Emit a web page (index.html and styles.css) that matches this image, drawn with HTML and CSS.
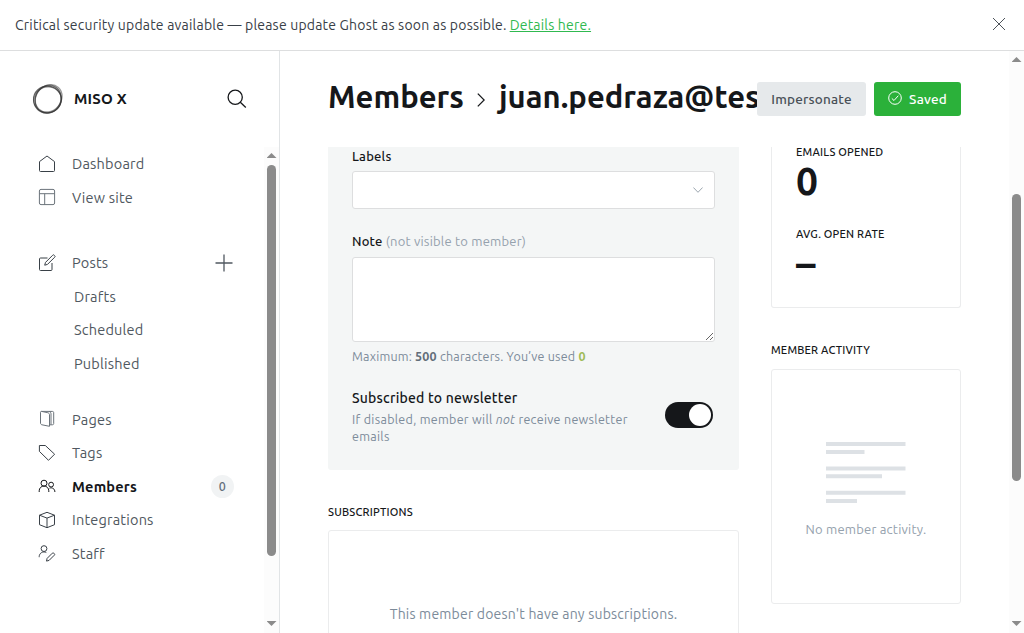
FILE: index.html
```html
<!DOCTYPE html>
<html lang="en">
<head>
<meta charset="utf-8">
<title>Members</title>
<link rel="stylesheet" href="styles.css">
</head>
<body>
<div class="app">
  <div class="banner">
    <p class="banner-text"><span>Critical security update available — please update Ghost as soon as possible.</span><a class="banner-link" href="#">Details here.</a></p>
    <svg class="close" viewBox="0 0 14 14"><path d="M1 1l12 12M13 1L1 13"/></svg>
  </div>
  <div class="body">
    <aside class="sidebar">
      <div class="brand">
        <svg class="logo" viewBox="0 0 32 32">
          <ellipse cx="15.4" cy="16.4" rx="13.9" ry="13.3" class="l1"/>
          <ellipse cx="16.7" cy="15.3" rx="14.5" ry="12.4" transform="rotate(-48 16.7 15.3)" class="l2"/>
          <ellipse cx="16.3" cy="16.2" rx="12.7" ry="14.2" transform="rotate(32 16 16)" class="l3"/>
          <ellipse cx="15.2" cy="16.8" rx="13.9" ry="13" transform="rotate(-20 16 16)" class="l4"/>
          <ellipse cx="16" cy="16" rx="14.2" ry="12.6" transform="rotate(-62 16 16)" class="l4"/>
        </svg>
        <span class="brand-name">MISO X</span>
        <svg class="search" viewBox="0 0 20 20"><circle cx="8.2" cy="8.2" r="7.1"/><path d="M13.3 13.3l5.5 5.2"/></svg>
      </div>
      <div class="nav-wrap">
        <nav class="nav">
          <div class="group">
            <a class="item"><svg class="icon" viewBox="0 0 18 18"><path d="M1.5 6.6L9 1l7.5 5.6v8.900a1 1 0 0 1-1 1h-13a1 1 0 0 1-1-1z"/></svg><span>Dashboard</span></a>
            <a class="item"><svg class="icon soft" viewBox="0 0 18 18"><rect x="1.400" y="1.400" width="15.200" height="15.200" rx="1.600"/><path d="M1.500 5.700h15M6.700 5.700v11"/></svg><span>View site</span></a>
          </div>
          <div class="group posts">
            <a class="item"><svg class="icon" viewBox="0 0 18 18"><path d="M9.500 4H2.500a1 1 0 0 0-1 1v10.500a1 1 0 0 0 1 1H13a1 1 0 0 0 1-1V9"/><path d="M6.700 11.200l.8-2.800L14.600 1.300a1.100 1.100 0 0 1 1.700 0l.3.3a1.100 1.100 0 0 1 0 1.700L9.500 10.400z"/></svg><span>Posts</span><svg class="plus" viewBox="0 0 18 18"><path d="M9 .5v17M.5 9h17"/></svg></a>
            <a class="item sub"><span>Drafts</span></a>
            <a class="item sub"><span>Scheduled</span></a>
            <a class="item sub"><span>Published</span></a>
          </div>
          <div class="group">
            <a class="item"><svg class="icon soft" viewBox="0 0 18 18"><path d="M2.500 2.300c0-.6.4-1 1-.9l6.300 1.300c1 .3 1.700 1 1.700 2v11.600L4 14.800c-.9-.2-1.500-.9-1.500-1.800zM3.400 1.400h11c.8 0 1.300.5 1.300 1.200v11c0 .7-.5 1.200-1.300 1.200h-2.900M11 1.400c1.300.5 2 1.200 2 2.400v10.800"/></svg><span>Pages</span></a>
            <a class="item"><svg class="icon" viewBox="0 0 18 18"><path d="M1.400 1.500h5.900l9.300 8.700-6.100 6.100L1.400 7.400z"/></svg><span>Tags</span></a>
            <a class="item active"><svg class="icon" viewBox="0 0 18 18"><circle cx="6" cy="6.200" r="3"/><path d="M1.200 15v-1.200a4.800 4.800 0 0 1 9.600 0V15"/><circle cx="13.100" cy="7.600" r="2.400"/><path d="M11.500 11.100c2.900-.9 5.400.8 5.400 3.900"/></svg><span>Members</span><span class="count">0</span></a>
            <a class="item"><svg class="icon" viewBox="0 0 18 18"><path d="M9 1.300l7.500 2.900v9.500L9 16.700l-7.500-3V4.200zM1.500 4.200L9 7.100l7.500-2.900M9 7.100v9.600"/></svg><span>Integrations</span></a>
            <a class="item"><svg class="icon" viewBox="0 0 18 18"><circle cx="6" cy="4.600" r="2.900"/><path d="M1.200 13.200v-.6a4.800 4.800 0 0 1 7.100-4.100"/><path d="M8.500 17.100l.6-2.700 5.200-5.200a1 1 0 0 1 1.500 0l.5.500a1 1 0 0 1 0 1.500L11.100 16.400z"/></svg><span>Staff</span></a>
          </div>
        </nav>
        <div class="scrollbar"><i class="arrow up"></i><i class="thumb"></i><i class="arrow down"></i></div>
      </div>
    </aside>
    <main class="main">
      <header class="header">
        <h1 class="title"><span class="crumb">Members</span><svg class="chev" viewBox="0 0 8 14"><path d="M.8.6L7.200 7 .8 13.400"/></svg><span>juan.pedraza@tes</span></h1>
        <div class="actions">
          <button class="btn grey"><span>Impersonate</span></button>
          <button class="btn green"><svg class="check" viewBox="0 0 14 14"><circle cx="7" cy="7" r="6.300"/><path d="M3.800 7.400l2.200 2.100 4.300-4.800"/></svg><span>Saved</span></button>
        </div>
      </header>
      <div class="content">
        <section class="left">
          <div class="panel">
            <label class="label">Labels</label>
            <div class="select"><svg class="down-chev" viewBox="0 0 10 6"><path d="M.4.5L5 5.300 9.600.5"/></svg></div>
            <label class="label note">Note <span class="hint">(not visible to member)</span></label>
            <textarea class="textarea"></textarea>
            <p class="help counter">Maximum: <b>500</b> characters. You’ve used <b class="used">0</b></p>
            <div class="newsletter">
              <div>
                <h4 class="news-title">Subscribed to newsletter</h4>
                <p class="help news-help">If disabled, member will <em>not</em> receive newsletter<br>emails</p>
              </div>
              <span class="toggle"></span>
            </div>
          </div>
          <h3 class="heading subs-heading">SUBSCRIPTIONS</h3>
          <div class="box subs"><span class="subs-text">This member doesn't have any subscriptions.</span></div>
        </section>
        <section class="right">
          <div class="box stats">
            <div class="heading opened">EMAILS OPENED</div>
            <div class="value">0</div>
            <div class="heading rate">AVG. OPEN RATE</div>
            <div class="value">–</div>
          </div>
          <h3 class="heading activity-heading">MEMBER ACTIVITY</h3>
          <div class="box activity">
            <svg class="lines" viewBox="0 0 80 62"><path d="M0 2h79.500M0 10h38.500M0 26.500h79.500M0 34.300h56M0 50.800h79.500M0 59h31"/></svg>
            <span class="no-activity">No member activity.</span>
          </div>
        </section>
      </div>
    </main>
    <div class="scrollbar page"><i class="arrow up"></i><i class="thumb"></i><i class="arrow down"></i></div>
  </div>
</div>
</body>
</html>
```
FILE: styles.css
```css
* { box-sizing: border-box; margin: 0; padding: 0; }
body { font-family: Ubuntu, "Noto Sans", sans-serif; letter-spacing: 0.2px; color: #15171a; background: #fff; overflow: hidden; }
svg { fill: none; stroke: currentColor; flex: none; display: block; }
span, p, h1, h3, h4, label { white-space: nowrap; }

.app { height: 633px; display: flex; flex-direction: column; }
.banner { height: 51px; border-bottom: 1px solid #dddedf; display: flex; align-items: center; justify-content: space-between; padding: 0 18px 0 15px; color: #394047; }
.banner-text { font-size: 14px; display: flex; gap: 3px; }
.banner-link { color: #30b950; }
.close { width: 14px; height: 14px; stroke-width: 0.9; margin-top: -2px; }
.body { flex: 1; display: flex; min-height: 0; }

.sidebar { width: 280px; border-right: 1px solid #e1e4e6; display: flex; flex-direction: column; }
.brand { height: 96px; display: flex; align-items: center; padding: 0 32px; }
.logo { width: 32px; height: 32px; color: #333; }
.l1 { stroke-width: 1.1; opacity: .75; }
.l2 { stroke-width: 1.2; opacity: .5; }
.l3 { stroke-width: 1.2; opacity: .5; }
.l4 { stroke-width: 1; opacity: .5; }
.brand-name { font-size: 15px; font-weight: 700; margin: -2px 0 0 10px; }
.search { width: 20px; height: 20px; margin-left: auto; stroke-width: 1.3; }
.nav-wrap { flex: 1; display: flex; justify-content: space-between; min-height: 0; }
.nav { width: 264px; color: #394047; }
.nav .group { margin-bottom: 32px; }
.nav .posts { margin-bottom: 22px; }
.item { height: 33.55px; display: flex; align-items: center; padding-left: 38px; font-size: 14.5px; color: #505860; }
.item.sub { padding-left: 74px; }
.icon { width: 18px; height: 18px; margin-right: 16px; color: #394047; stroke-width: 1; }
.icon.soft { color: #6b737a; }
.plus { width: 18px; height: 18px; margin: 0 31px 0 auto; color: #505860; stroke-width: 1.3; }
.active { font-weight: 700; color: #15171a; }
.active .icon { color: #15171a; }
.count { width: 23px; height: 23px; border-radius: 12px; background: #f1f3f4; margin: 0 30px 0 auto; font-size: 12.5px; font-weight: 500; color: #626d79; display: flex; align-items: center; justify-content: center; }

.scrollbar { width: 15px; background: #fcfcfc; display: flex; flex-direction: column; align-items: center; padding: 6px 0 7px; }
.arrow { width: 10px; height: 5px; background: #8b8b8b; }
.arrow.up { clip-path: polygon(50% 0, 100% 100%, 0 100%); }
.arrow.down { clip-path: polygon(0 0, 100% 0, 50% 100%); margin-top: auto; }
.thumb { width: 9px; height: 391px; border-radius: 5px; background: #8b8b8b; margin-top: 7px; }
.page .thumb { height: 287px; margin-top: 132px; }

.main { width: 729px; display: flex; flex-direction: column; min-width: 0; padding: 0 48px; }
.header { height: 96px; flex: none; display: flex; align-items: center; }
.title { flex: 1; min-width: 0; display: flex; align-items: center; font-size: 31px; font-weight: 600; line-height: 44px; letter-spacing: 0; margin-top: -5px; }
.crumb { width: 135px; }
.chev { width: 8px; height: 14px; margin: 7px 14px 0; stroke-width: 1.3; }
.actions { display: flex; gap: 8px; }
.btn { border: 0; border-radius: 3px; height: 34px; font: 500 13.5px Ubuntu, "Noto Sans", sans-serif; letter-spacing: 0.2px; display: flex; align-items: center; justify-content: center; }
.grey { width: 109px; background: #e6e9eb; color: #495057; }
.green { width: 87px; background: #2bb13a; color: #fff; gap: 7px; }
.check { width: 14px; height: 14px; margin-top: -2px; }

.content { flex: 1; min-height: 0; overflow: hidden; display: flex; gap: 32px; }
.left { width: 411px; }
.right { width: 190px; }
.panel { height: 323px; background: #f4f6f6; border-radius: 0 0 3px 3px; padding: 0 24px; display: flex; flex-direction: column; }
.label { font-size: 13px; font-weight: 500; line-height: 18px; height: 24px; }
.select { height: 38px; flex: none; background: #fff; border: 1px solid #dddedf; border-radius: 3px; display: flex; justify-content: flex-end; align-items: center; padding-right: 11.500px; }
.down-chev { width: 10px; height: 6px; color: #9ba5ae; }
.note { margin-top: 22px; height: 26px; line-height: 20px; }
.hint { font-weight: 400; color: #95a1ad; }
.textarea { height: 85px; flex: none; background: #fff; border: 1px solid #dddedf; border-radius: 3px; resize: vertical; }
.help { color: #7c8b9a; font-size: 12.5px; line-height: 17px; }
.news-help { letter-spacing: 0.3px; }
.counter { margin-top: 6px; }
.counter b { color: #626d79; }
.counter .used { color: #9fbb58; }
.newsletter { display: flex; justify-content: space-between; margin-top: 23px; }
.news-title { font-size: 14px; font-weight: 500; line-height: 20px; height: 23px; }
.toggle { width: 48px; height: 26px; border-radius: 13px; background: #15171a; margin: 14px 2px 0 0; padding: 2px; display: flex; justify-content: flex-end; }
.toggle::after { content: ""; width: 22px; height: 22px; border-radius: 50%; background: #fff; }

.heading { font-size: 11px; font-weight: 500; line-height: 16px; }
.subs-heading { margin: 34px 0 10px; }
.box { border: 1px solid #ebeced; border-radius: 3px; }
.subs { height: 200px; display: flex; justify-content: center; padding-top: 73px; }
.subs-text { font-size: 14px; line-height: 20px; height: 20px; color: #7c8b9a; }
.stats { height: 161px; border-top: 0; border-radius: 0 0 3px 3px; padding: 0 24px; display: flow-root; }
.opened { margin-top: -3px; }
.value { font-size: 39px; font-weight: 700; line-height: 42px; height: 44px; letter-spacing: 0; }
.rate { margin-top: 22px; }
.activity-heading { margin: 34px 0 11px; }
.activity { height: 235px; display: flex; flex-direction: column; align-items: center; padding-top: 72px; }
.lines { width: 80px; height: 62px; color: #dde1e5; stroke-width: 4; }
.no-activity { font-size: 13px; color: #95a1ad; margin-top: 18px; }
```
